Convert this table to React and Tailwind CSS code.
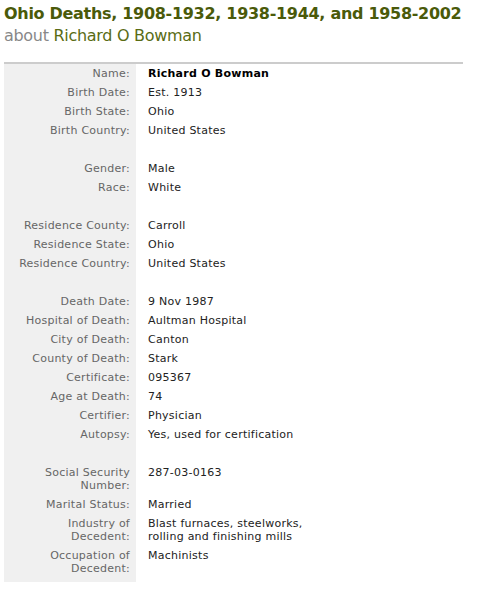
import React from 'react';

const rows = [
  ['Name:', 'Richard O Bowman', true],
  ['Birth Date:', 'Est. 1913'],
  ['Birth State:', 'Ohio'],
  ['Birth Country:', 'United States'],
  null,
  ['Gender:', 'Male'],
  ['Race:', 'White'],
  null,
  ['Residence County:', 'Carroll'],
  ['Residence State:', 'Ohio'],
  ['Residence Country:', 'United States'],
  null,
  ['Death Date:', '9 Nov 1987'],
  ['Hospital of Death:', 'Aultman Hospital'],
  ['City of Death:', 'Canton'],
  ['County of Death:', 'Stark'],
  ['Certificate:', '095367'],
  ['Age at Death:', '74'],
  ['Certifier:', 'Physician'],
  ['Autopsy:', 'Yes, used for certification'],
  null,
  [['Social Security', 'Number:'], '287-03-0163'],
  ['Marital Status:', 'Married'],
  [['Industry of', 'Decedent:'], ['Blast furnaces, steelworks,', 'rolling and finishing mills']],
  [['Occupation of', 'Decedent:'], 'Machinists'],
];

const Lines = ({ v }) =>
  Array.isArray(v) ? v.map((l, i) => <div key={i}>{l}</div>) : v;

export default function App() {
  return (
    <div className="bg-white min-h-[592px] pl-[4px] pt-[3px]" style={{ fontFamily: '"DejaVu Sans", Verdana, sans-serif' }}>
      <h1 className="text-[16px] font-bold leading-[22px] text-[#4a5a0a] tracking-[-0.3px]">
        Ohio Deaths, 1908-1932, 1938-1944, and 1958-2002
      </h1>
      <div className="text-[16px] leading-[22px] text-[#888888] tracking-[-0.3px]">
        about <span className="text-[#5a6c14]">Richard O Bowman</span>
      </div>
      <div className="mt-[15px] w-[459px] border-t-2 border-[#cccccc] text-[11px] leading-[13px] tracking-[0.25px]">
        {rows.map((r, i) =>
          r === null ? (
            <div key={i} className="flex">
              <div className="w-[132px] h-[19px] bg-[#f0f0f0]" />
            </div>
          ) : (
            <div key={i} className="flex">
              <div className="w-[132px] shrink-0 bg-[#f0f0f0] text-right text-[#666666] pr-[6px] py-[3px]">
                <Lines v={r[0]} />
              </div>
              <div className={`pl-[12px] py-[3px] text-[#222222] ${r[2] ? 'font-bold text-black' : ''}`}>
                <Lines v={r[1]} />
              </div>
            </div>
          )
        )}
        <div className="flex">
          <div className="w-[132px] h-[4px] bg-[#f0f0f0]" />
        </div>
      </div>
    </div>
  );
}
